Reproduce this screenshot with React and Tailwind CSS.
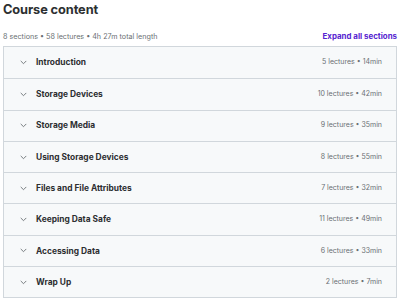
import React from 'react';

const sections = [
  { title: 'Introduction', lectures: 5, length: '14min' },
  { title: 'Storage Devices', lectures: 10, length: '42min' },
  { title: 'Storage Media', lectures: 9, length: '35min' },
  { title: 'Using Storage Devices', lectures: 8, length: '55min' },
  { title: 'Files and File Attributes', lectures: 7, length: '32min' },
  { title: 'Keeping Data Safe', lectures: 11, length: '49min' },
  { title: 'Accessing Data', lectures: 6, length: '33min' },
  { title: 'Wrap Up', lectures: 2, length: '7min' },
];

const Chevron = () => (
  <svg width="7" height="5" viewBox="0 0 7 5" fill="none" className="shrink-0">
    <path d="M1 1.2 L3.5 3.7 L6 1.2" stroke="#6a6f73" strokeWidth="0.9" strokeLinecap="round" strokeLinejoin="round" />
  </svg>
);

const App = () => {
  return (
    <div className="w-[400px] h-[302px] bg-white overflow-hidden px-[3px] font-['Inter',sans-serif] text-[#2d2f31]">
      <h2 className="text-[12.8px] leading-[18px] font-bold tracking-[-0.1px] pt-[1px]">Course content</h2>

      <div className="flex justify-between items-center mt-[9px] h-[18px]">
        <p className="text-[7.2px] text-[#6a6f73]">8 sections • 58 lectures • 4h 27m total length</p>
        <button className="text-[7.9px] font-bold text-[#5624d0]">Expand all sections</button>
      </div>

      {/* Section list */}
      <div className="border border-[#d1d7dc] bg-[#f7f9fa]">
        {sections.map((s, i) => (
          <div
            key={s.title}
            className={`flex items-center justify-between h-[31.3px] pl-[16px] pr-[14px] ${i > 0 ? 'border-t border-[#d1d7dc]' : ''}`}
          >
            <div className="flex items-center gap-[9px]">
              <Chevron />
              <span className="text-[8.4px] font-bold">{s.title}</span>
            </div>
            <span className="text-[7px] text-[#6a6f73]">
              {s.lectures} lectures • {s.length}
            </span>
          </div>
        ))}
      </div>
    </div>
  );
};

export default App;
